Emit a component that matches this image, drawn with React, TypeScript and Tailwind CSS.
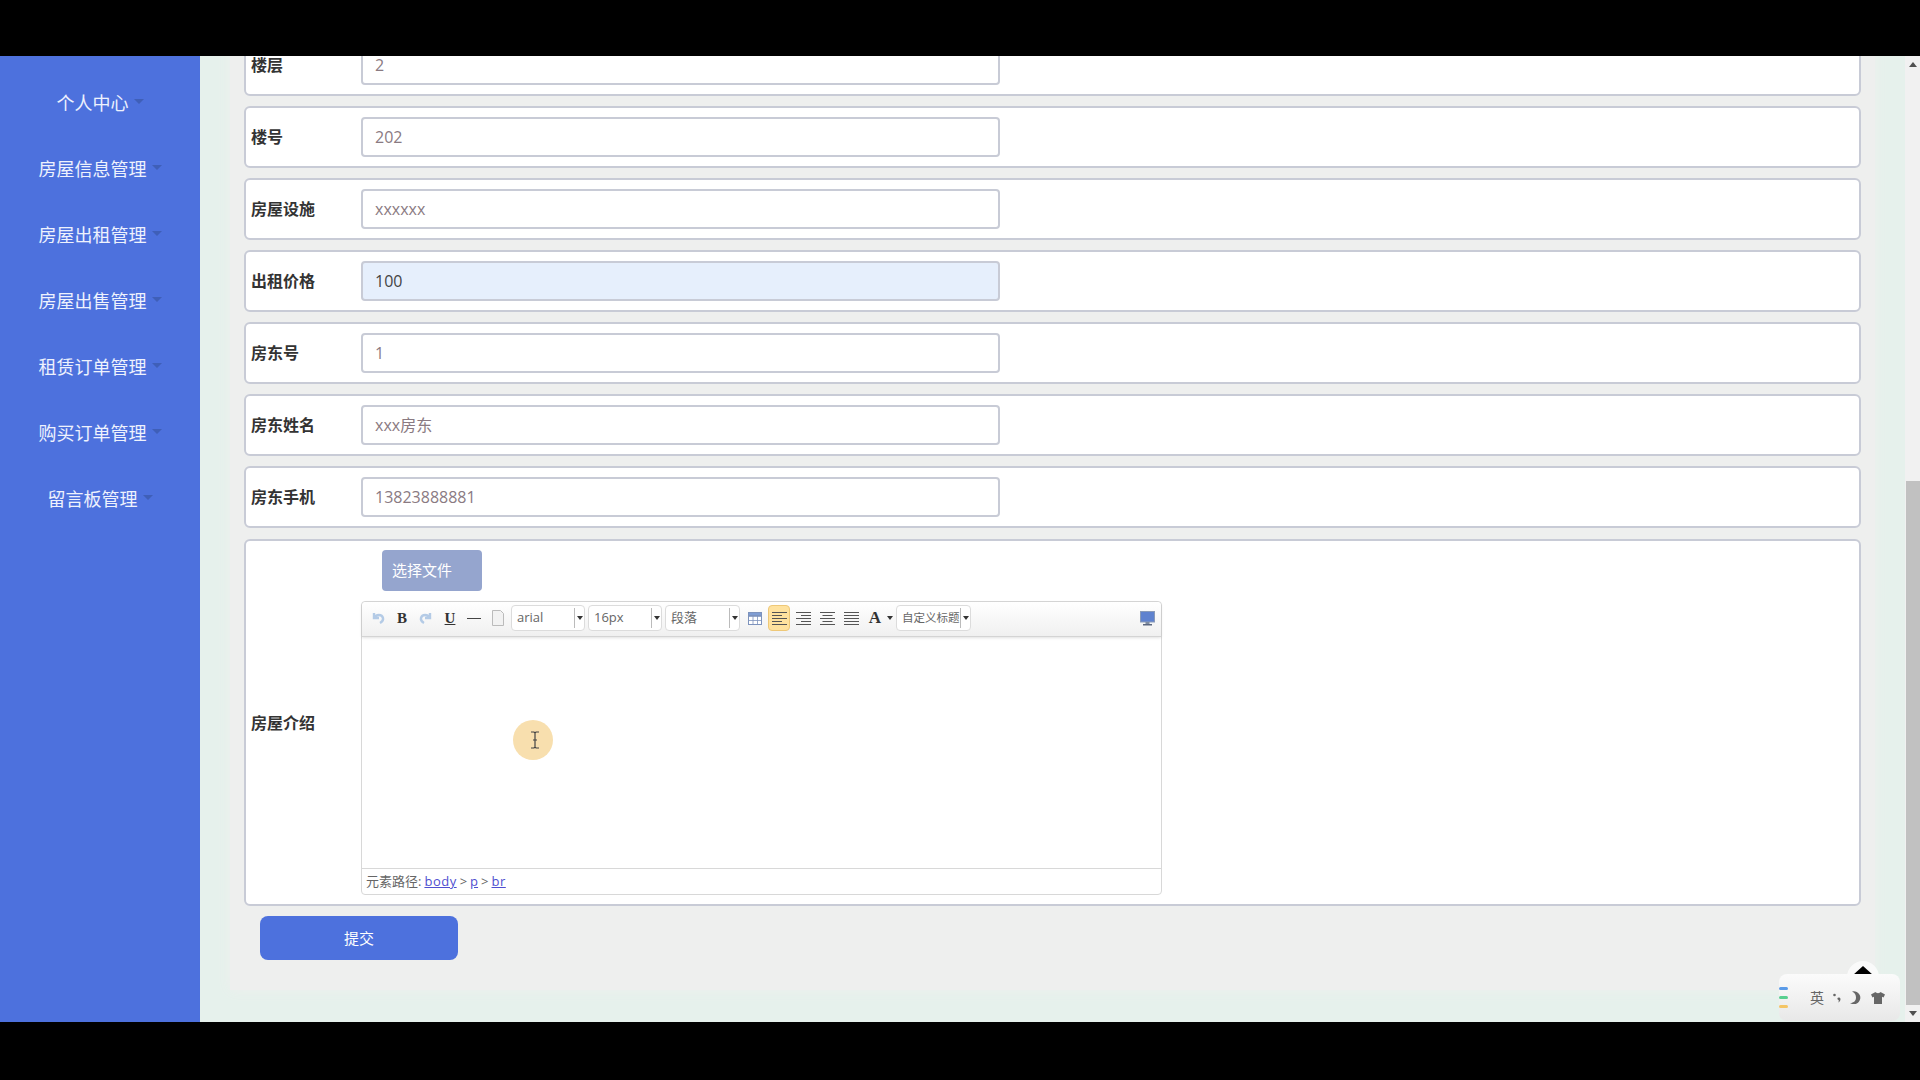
import React from 'react';

const menus = ['个人中心', '房屋信息管理', '房屋出租管理', '房屋出售管理', '租赁订单管理', '购买订单管理', '留言板管理'];

const rows = [
  { label: '楼层', value: '2' },
  { label: '楼号', value: '202' },
  { label: '房屋设施', value: 'xxxxxx' },
  { label: '出租价格', value: '100', active: true },
  { label: '房东号', value: '1' },
  { label: '房东姓名', value: 'xxx房东' },
  { label: '房东手机', value: '13823888881' },
];

const font = "font-['Open_Sans','Noto_Sans_CJK_SC',sans-serif]";

const Lines = ({ kind }: { kind: 'left' | 'right' | 'center' | 'justify' }) => {
  const ys = [2, 5, 8, 11, 14];
  const short = [false, true, false, true, false];
  return (
    <svg width="15" height="16" viewBox="0 0 15 16" stroke="#555" strokeWidth="1">
      {ys.map((y, i) => {
        const s = short[i] && kind !== 'justify';
        let x1 = 0;
        let x2 = 15;
        if (s && kind === 'left') x2 = 10;
        if (s && kind === 'right') x1 = 5;
        if (s && kind === 'center') {
          x1 = 2.5;
          x2 = 12.5;
        }
        return <line key={y} x1={x1} x2={x2} y1={y + 0.5} y2={y + 0.5} />;
      })}
    </svg>
  );
};

const Btn = ({ children, on }: { children: React.ReactNode; on?: boolean }) => (
  <div
    className={
      'h-[26px] flex items-center justify-center ' +
      (on ? 'bg-[#ffe29e] border border-[#eec878] rounded-sm mx-px w-[22px]' : 'w-6')
    }
  >
    {children}
  </div>
);

const Select = ({ text, w, small }: { text: string; w: string; small?: boolean }) => (
  <div className={'h-[26px] flex items-center bg-white border border-[#dcdcdc] rounded-sm ' + w}>
    <div
      className={
        'flex-1 min-w-0 h-[20px] flex items-center pl-[5px] border-r border-[#bbb] text-[#666] whitespace-nowrap ' +
        (small ? 'text-[11.5px]' : 'text-[13px]')
      }
    >
      {text}
    </div>
    <div className="w-[9px] flex justify-center">
      <div className="w-0 h-0 border-x-[3px] border-x-transparent border-t-[4px] border-t-[#333]" />
    </div>
  </div>
);

const Toolbar = () => (
  <div className="h-[35px] flex items-center pl-1 pr-[6px] pb-[2px] rounded-t bg-gradient-to-b from-white to-[#f0f0f0] border-b border-[#d4d4d4] shadow-[0_1px_3px_rgba(0,0,0,0.12)]">
    <Btn>
      <svg width="14" height="14" viewBox="0 0 14 14" fill="none" stroke="#b4cbe6" strokeWidth="2.4">
        <path d="M3 2v5h5M3 7c2-4 8-4 9 0 .4 2-1 4-3 5" />
      </svg>
    </Btn>
    <Btn>
      <span className="font-['Liberation_Serif',serif] font-bold text-[15px] text-[#333]">B</span>
    </Btn>
    <Btn>
      <svg width="14" height="14" viewBox="0 0 14 14" fill="none" stroke="#b4cbe6" strokeWidth="2.4">
        <path d="M11 2v5H6M11 7C9 3 3 3 2 7c-.4 2 1 4 3 5" />
      </svg>
    </Btn>
    <Btn>
      <span className="font-['Liberation_Serif',serif] font-bold text-[15px] text-[#333] underline">U</span>
    </Btn>
    <Btn>
      <div className="w-[14px] h-px bg-[#444]" />
    </Btn>
    <Btn>
      <svg width="14" height="16" viewBox="0 0 14 16" fill="#f2f2f2" stroke="#bbb">
        <path d="M1.5.5h8l3 3v12h-11z" />
      </svg>
    </Btn>
    <div className="w-px" />
    <div className="flex gap-[3px]">
      <Select text="arial" w="w-[74px]" />
      <Select text="16px" w="w-[74px]" />
      <Select text="段落" w="w-[75px]" />
    </div>
    <div className="w-[3px]" />
    <Btn>
      <svg width="14" height="13" viewBox="0 0 14 13" fill="#fff" stroke="#7d93bd">
        <rect x=".5" y=".5" width="13" height="12" />
        <path d="M.5 4.5h13M.5 8.5h13M5 .5v12M9.500 .5v12" strokeWidth=".8" />
        <rect x=".5" y=".5" width="13" height="3" fill="#7f9dd3" />
      </svg>
    </Btn>
    <Btn on>
      <Lines kind="left" />
    </Btn>
    <Btn>
      <Lines kind="right" />
    </Btn>
    <Btn>
      <Lines kind="center" />
    </Btn>
    <Btn>
      <Lines kind="justify" />
    </Btn>
    <div className="w-[24px] h-[26px] flex items-center justify-center">
      <span className="font-['Liberation_Serif',serif] font-bold text-[17px] text-[#333]">A</span>
    </div>
    <div className="w-[9px] flex">
      <div className="w-0 h-0 border-x-[3px] border-x-transparent border-t-[4px] border-t-[#333]" />
    </div>
    <Select text="自定义标题" w="w-[75px] mr-auto" small />
    <svg width="15" height="15" viewBox="0 0 15 15">
      <rect x=".5" y=".5" width="14" height="10.500" fill="#5f82cf" stroke="#8a9bb8" />
      <rect x="5.500" y="11" width="4" height="2" fill="#7f8ba0" />
      <rect x="3" y="13" width="9" height="1.500" fill="#5c6880" />
    </svg>
  </div>
);

const Editor = () => (
  <div className="w-[801px] h-[294px] flex flex-col border border-[#d8d8d8] rounded bg-white">
    <Toolbar />
    <div className="flex-1" />
    <div className="h-[26px] border-t border-[#d8d8d8] flex items-center pl-1 text-[13px] text-[#666] gap-[3px] whitespace-nowrap">
      元素路径:
      <span className="text-[#4f4fd0] underline tracking-[0.5px]">body</span>
      &gt;
      <span className="text-[#4f4fd0] underline">p</span>
      &gt;
      <span className="text-[#4f4fd0] underline tracking-[0.5px]">br</span>
    </div>
  </div>
);

export default function App() {
  return (
    <div className={'h-[1080px] flex flex-col overflow-hidden bg-black ' + font}>
      <div className="h-14 shrink-0 bg-black" />

      <div className="h-[966px] flex relative overflow-hidden">
        {/* Sidebar */}
        <aside className="w-[200px] shrink-0 bg-[#4d71dd] pt-[14px]">
          {menus.map((m) => (
            <div key={m} className="h-[66px] flex items-center justify-center gap-[5px] text-[18px] text-[#eef2fd]">
              <span>{m}</span>
              <div className="w-0 h-0 border-x-[5px] border-x-transparent border-t-[5px] border-t-[#3f5fb8] mt-[-4px]" />
            </div>
          ))}
        </aside>

        {/* Main */}
        <main className="flex-1 min-w-0 bg-[#e6f1ec] px-[30px]">
          <div className="h-[956px] bg-[#eeefee] px-[14px] mt-[-22px] flex flex-col gap-[10px] shadow-[0_0_12px_#eeefee]">
            {rows.map((r) => (
              <div
                key={r.label}
                className="h-[62px] shrink-0 flex items-center pl-[5px] bg-white border-2 border-[#c8cbd6] rounded-md"
              >
                <label className="w-[110px] text-[16px] font-bold text-[#333]">{r.label}</label>
                <div
                  className={
                    'w-[639px] h-10 flex items-center pl-[12px] border-2 border-[#c8cbd6] rounded text-[16px] ' +
                    (r.active ? 'bg-[#e6effc] text-[#444]' : 'bg-white text-[#8a7a82]')
                  }
                >
                  {r.value}
                </div>
              </div>
            ))}

            <div className="h-[367px] shrink-0 mt-[1px] flex items-center pl-[5px] bg-white border-2 border-[#c8cbd6] rounded-md">
              <label className="w-[110px] text-[16px] font-bold text-[#333]">房屋介绍</label>
              <div className="flex flex-col">
                <div className="ml-[21px] mb-[10px] w-[100px] h-[41px] flex items-center pl-[10px] rounded-sm bg-[#95a5ce] text-[15px] text-white">
                  选择文件
                </div>
                <Editor />
              </div>
            </div>

            <div className="ml-4 w-[198px] h-11 shrink-0 flex items-center justify-center rounded-lg bg-[#4d71dd] text-[15px] text-white">
              提交
            </div>
          </div>
        </main>

        {/* Scrollbar */}
        <div className="w-[15px] shrink-0 bg-[#f1f1f1] flex flex-col">
          <div className="h-[15px] flex items-center justify-center mt-[1px]">
            <div className="w-0 h-0 border-x-[4px] border-x-transparent border-b-[5px] border-b-[#505050]" />
          </div>
          <div className="ml-[1px] mt-[409px] h-[524px] bg-[#c1c1c1]" />
          <div className="flex-1 flex items-center justify-center">
            <div className="w-0 h-0 border-x-[4px] border-x-transparent border-t-[5px] border-t-[#505050]" />
          </div>
        </div>

        {/* Mouse highlight */}
        <div className="absolute left-[513px] top-[664px] w-10 h-10 rounded-full bg-[#f8dfae] flex items-center justify-center">
          <svg className="ml-[4px]" width="10" height="18" viewBox="0 0 10 18" fill="none" stroke="#444" strokeWidth="1.200">
            <path d="M1 1h3l1 1 1-1h3M5 2v14M1 17h3l1-1 1 1h3M3 9h4" />
          </svg>
        </div>

        {/* Input method bar */}
        <div className="absolute left-[1847px] top-[905px] w-8 h-8 rounded-full bg-white/70 flex justify-center pt-[5px]">
          <div className="w-0 h-0 border-x-[10px] border-x-transparent border-b-[9px] border-b-black" />
        </div>
        <div className="absolute left-[1779px] top-[918px] w-[121px] h-[47px] rounded-lg bg-gradient-to-b from-[#fbfbfb] to-[#e8e8e8] flex items-center text-[#666]">
          <div className="flex flex-col gap-[6px] w-[9px]">
            <div className="h-[3px] rounded-full bg-[#5b9be8]" />
            <div className="h-[3px] rounded-full bg-[#58cf8f]" />
            <div className="h-[3px] rounded-full bg-[#f4c565]" />
          </div>
          <span className="ml-[22px] text-[14px] leading-none">英</span>
          <svg className="ml-[9px]" width="8" height="10" viewBox="0 0 8 10" fill="#666">
            <circle cx="1.500" cy="2" r="1.300" />
            <path d="M4.500 5a1.800 1.800 0 0 1 3 1c0 2-1 3-2.500 3.500 1-1 1-2 .5-2.500a1.500 1.500 0 0 1-1-2z" />
          </svg>
          <svg className="ml-[9px]" width="11" height="13" viewBox="0 0 11 13" fill="#666">
            <path d="M2 .5a6.500 6.500 0 1 1-2 11.500c4 0 6-2.500 6-5.500S4.500 1.500 2 .5z" />
          </svg>
          <svg className="ml-[10px]" width="14" height="12" viewBox="0 0 14 12" fill="#666">
            <path d="M4.500 0 0 2.500 1.500 5.500 3 4.800V12h8V4.800l1.500.7L14 2.500 9.500 0C9 1.500 5 1.500 4.500 0z" />
          </svg>
        </div>
      </div>

      <div className="flex-1 bg-black" />
    </div>
  );
}
